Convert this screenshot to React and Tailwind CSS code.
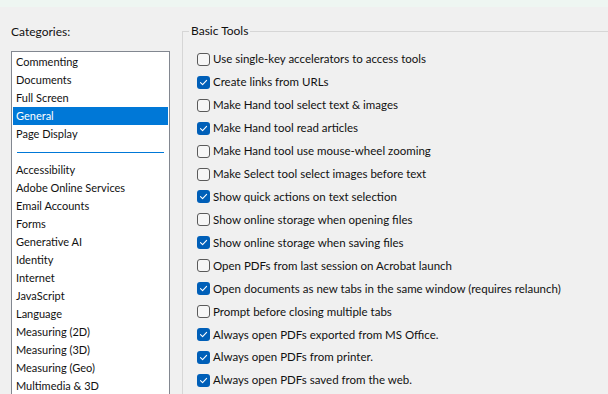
import React from 'react';

const categoriesTop = ['Commenting', 'Documents', 'Full Screen', 'General', 'Page Display'];
const categoriesRest = [
  'Accessibility', 'Adobe Online Services', 'Email Accounts', 'Forms', 'Generative AI',
  'Identity', 'Internet', 'JavaScript', 'Language', 'Measuring (2D)', 'Measuring (3D)',
  'Measuring (Geo)', 'Multimedia & 3D',
];

const options = [
  { lbl: 'Use single-key accelerators to access tools', on: false },
  { lbl: 'Create links from URLs', on: true },
  { lbl: 'Make Hand tool select text & images', on: false },
  { lbl: 'Make Hand tool read articles', on: true },
  { lbl: 'Make Hand tool use mouse-wheel zooming', on: false },
  { lbl: 'Make Select tool select images before text', on: false },
  { lbl: 'Show quick actions on text selection', on: true },
  { lbl: 'Show online storage when opening files', on: false },
  { lbl: 'Show online storage when saving files', on: true },
  { lbl: 'Open PDFs from last session on Acrobat launch', on: false },
  { lbl: 'Open documents as new tabs in the same window (requires relaunch)', on: true },
  { lbl: 'Prompt before closing multiple tabs', on: false },
  { lbl: 'Always open PDFs exported from MS Office.', on: true },
  { lbl: 'Always open PDFs from printer.', on: true },
  { lbl: 'Always open PDFs saved from the web.', on: true },
];

const Checkbox = ({ on }) =>
  on ? (
    <div className="w-[13px] h-[13px] rounded-[3px] bg-[#005fb8] flex items-center justify-center shrink-0">
      <svg width="9" height="9" viewBox="0 0 9 9" fill="none">
        <path d="M1.5 4.6 L3.6 6.6 L7.6 2.4" stroke="white" strokeWidth="1.1" strokeLinecap="round" strokeLinejoin="round" />
      </svg>
    </div>
  ) : (
    <div className="w-[13px] h-[13px] rounded-[3px] border border-[#5a5a5a] bg-[#f6f6f6] shrink-0" />
  );

const App = () => {
  return (
    <div className="w-[608px] h-[394px] overflow-hidden bg-[#f0f0f0] text-[#111] text-[12px] font-['Lato','Noto_Sans',sans-serif] flex flex-col">
      <div className="h-[7px] bg-[#eef6f2] shrink-0" />
      <div className="flex flex-1 min-h-0">
        <div className="w-[182px] shrink-0 flex flex-col pl-[11px] pt-[17px]">
          <div className="h-[16px] leading-[16px] mb-[11px]">Categories:</div>
          <div className="w-[159px] flex-1 bg-white border border-[#828790] border-b-0 px-px pt-px overflow-hidden text-[11px]">
            {categoriesTop.map((c) => (
              <div
                key={c}
                className={`h-[18px] leading-[18px] px-[3px] whitespace-nowrap ${c === 'General' ? 'bg-[#0078d7] text-white' : ''}`}
              >
                {c}
              </div>
            ))}
            <div className="h-[18px] flex items-center px-[4px]">
              <div className="h-px w-full bg-[#0078d7]" />
            </div>
            {categoriesRest.map((c) => (
              <div key={c} className="h-[18px] leading-[18px] px-[3px] whitespace-nowrap">{c}</div>
            ))}
          </div>
        </div>
        <div className="flex-1 pt-[24px] min-w-0">
          <div className="relative h-full border-l border-t border-[#d6d6d6]">
            <div className="absolute left-[6px] top-[-9px] px-[2px] bg-[#f0f0f0] leading-[16px]">Basic Tools</div>
            <div className="flex flex-col pt-[16px] pl-[14px] text-[11.5px]">
              {options.map((o, idx) => (
                <div key={idx} className="h-[22.93px] flex items-center gap-[3px] whitespace-nowrap">
                  <Checkbox on={o.on} />
                  <span className="leading-[16px]">{o.lbl}</span>
                </div>
              ))}
            </div>
          </div>
        </div>
      </div>
    </div>
  );
};

export default App;
